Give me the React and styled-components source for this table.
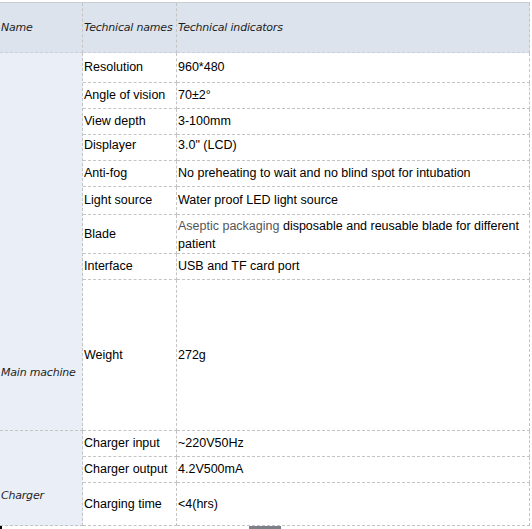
import React from "react";
import styled, { createGlobalStyle } from "styled-components";

const GlobalStyle = createGlobalStyle`
  body {
    margin: 0;
    background: #ffffff;
    font-family: "Liberation Sans", Arial, sans-serif;
  }
`;

const Sheet = styled.div`
  width: 532px;
  height: 529px;
  padding-top: 2px;
  box-sizing: border-box;
  overflow: hidden;
`;

const Table = styled.div`
  display: grid;
  grid-template-columns: 83px 94px 353px;
  grid-template-rows: 50px 30px 26px 26px 26px 26px 28px 39px 26px 151px 26px 26px 43px;
  border-top: 1px solid #c9ced6;
  width: 530px;
`;

const Cell = styled.div`
  box-sizing: border-box;
  border-right: 1px dashed #c4c4c4;
  border-bottom: 1px dashed #c4c4c4;
  display: flex;
  align-items: center;
  padding-left: 1px;
  padding-bottom: ${(p) => p.$lift || 0}px;
  font-size: 12.5px;
  color: #000;
  line-height: 17px;
  white-space: nowrap;
`;

const HeadCell = styled(Cell)`
  background: #dce3ed;
  font-family: "DejaVu Sans", sans-serif;
  font-style: italic;
  font-size: 11px;
  letter-spacing: -0.2px;
  color: #1e1e1e;
  border-bottom-color: #c9d0da;
`;

const GroupCell = styled(Cell)`
  grid-row: span ${(p) => p.$span};
  background: #e9eef7;
  align-items: flex-end;
  padding-bottom: ${(p) => p.$bottom}px;
  font-family: "DejaVu Sans", sans-serif;
  font-style: italic;
  font-size: 11px;
  letter-spacing: -0.2px;
  color: #1e1e1e;
`;

const WrapCell = styled(Cell)`
  padding-top: 1px;
  line-height: 18px;
`;

const Muted = styled.span`
  color: #555;
`;

const Footer = styled.div`
  display: flex;
  align-items: flex-end;
  height: 4px;
`;

const Mark = styled.div`
  width: 2px;
  height: 4px;
  background: #000;
`;

const Thumb = styled.div`
  width: 32px;
  height: 4px;
  margin-left: 247px;
  background: #7b8089;
`;

const mainRows = [
  ["Resolution", "960*480"],
  ["Angle of vision", "70±2°"],
  ["View depth", "3-100mm"],
  ["Displayer", '3.0" (LCD)', 5],
  ["Anti-fog", "No preheating to wait and no blind spot for intubation"],
  ["Light source", "Water proof LED light source"],
];

const chargerRows = [
  ["Charger input", "~220V50Hz"],
  ["Charger output", "4.2V500mA"],
  ["Charging time", "<4(hrs)"],
];

export default function App() {
  return (
    <>
      <GlobalStyle />
      <Sheet>
        <Table>
          <HeadCell>Name</HeadCell>
          <HeadCell>Technical names</HeadCell>
          <HeadCell>Technical indicators</HeadCell>

          <GroupCell $span={9} $bottom={49}>Main machine</GroupCell>
          {mainRows.map(([name, value, lift]) => (
            <React.Fragment key={name}>
              <Cell $lift={lift}>{name}</Cell>
              <Cell $lift={lift}>{value}</Cell>
            </React.Fragment>
          ))}
          <Cell>Blade</Cell>
          <WrapCell>
            <div>
              <Muted>Aseptic packaging</Muted>{" "}
              <span>disposable and reusable blade for different</span>
              <br />
              <span>patient</span>
            </div>
          </WrapCell>
          <Cell>Interface</Cell>
          <Cell>USB and TF card port</Cell>
          <Cell>Weight</Cell>
          <Cell>272g</Cell>

          <GroupCell $span={3} $bottom={21}>Charger</GroupCell>
          {chargerRows.map(([name, value]) => (
            <React.Fragment key={name}>
              <Cell>{name}</Cell>
              <Cell>{value}</Cell>
            </React.Fragment>
          ))}
        </Table>
        <Footer>
          <Mark />
          <Thumb />
        </Footer>
      </Sheet>
    </>
  );
}
